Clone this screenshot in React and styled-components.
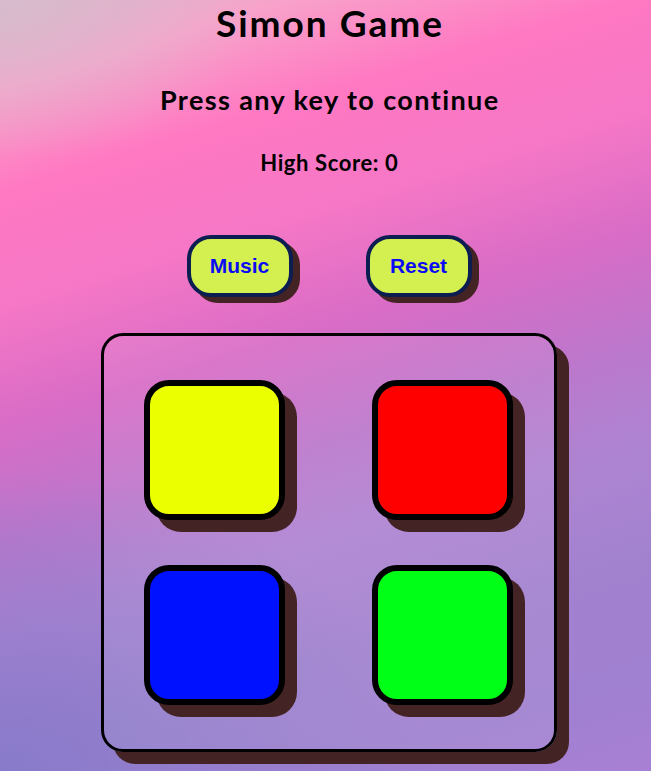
import React from "react";
import styled, { createGlobalStyle } from "styled-components";

const GlobalStyle = createGlobalStyle`
  html, body {
    margin: 0;
    padding: 0;
    min-height: 100%;
  }
  body {
    font-family: Lato, "Open Sans", sans-serif;
    background:
      radial-gradient(ellipse 420px 300px at 0% 100%, rgba(128, 120, 200, 0.75), rgba(128, 120, 200, 0) 100%),
      radial-gradient(ellipse 260px 160px at 0% 0%, rgba(214, 190, 206, 0.8), rgba(214, 190, 206, 0) 100%),
      linear-gradient(163deg,
        #dab4ca 0%,
        #f8a2ca 9%,
        #ff78c2 20%,
        #f577c6 32%,
        #d86cc6 44%,
        #bb78cc 56%,
        #ae84d2 66%,
        #a282cf 78%,
        #a080d0 90%,
        #a880d4 100%);
    background-attachment: fixed;
    min-height: 771px;
    overflow: hidden;
  }
`;

const Page = styled.main`
  display: flex;
  flex-direction: column;
  align-items: center;
  padding-left: 7px;
`;

const Heading = styled.h1`
  margin: ${(p) => p.$top}px 0 0;
  padding-left: ${(p) => p.$spacing}px;
  font-size: ${(p) => p.$size}px;
  line-height: ${(p) => p.$line}px;
  letter-spacing: ${(p) => p.$spacing}px;
  font-weight: 700;
  color: #000;
`;

const Controls = styled.div`
  display: flex;
  gap: 73px;
  margin-top: 59px;
`;

const ControlButton = styled.button`
  box-sizing: border-box;
  width: 106px;
  height: 62px;
  border: 4px solid #0b1d51;
  border-radius: 24px;
  background: #d4ef50;
  box-shadow: 7px 6px 0 #432323;
  color: #0a0af5;
  font-family: "Liberation Sans", Arial, sans-serif;
  font-weight: 700;
  font-size: 21px;
  cursor: pointer;
  padding: 0;
`;

const Board = styled.div`
  box-sizing: border-box;
  width: 456px;
  margin-top: 36px;
  display: grid;
  grid-template-columns: repeat(2, 141px);
  grid-auto-rows: 140px;
  column-gap: 87px;
  row-gap: 45px;
  padding: 44px 41px 44px 40px;
  border: 3px solid #000;
  border-radius: 22px;
  background: rgba(255, 255, 255, 0.07);
  box-shadow: 12px 12px 0 #432323;
`;

const Tile = styled.div`
  box-sizing: border-box;
  border: 6px solid #000;
  border-radius: 25px;
  background: ${(p) => p.$color};
  box-shadow: 12px 12px 0 #432323;
  cursor: pointer;
`;

const colors = ["#ebff00", "#ff0000", "#0011ff", "#00ff17"];

export default function App() {
  return (
    <>
      <GlobalStyle />
      <Page>
        <Heading $top={1} $size={37} $line={44} $spacing={2}>
          Simon Game
        </Heading>
        <Heading as="h2" $top={39} $size={27} $line={32} $spacing={1.4}>
          Press any key to continue
        </Heading>
        <Heading as="h3" $top={32.5} $size={22} $line={27} $spacing={0.6}>
          High Score: 0
        </Heading>
        <Controls>
          <ControlButton>Music</ControlButton>
          <ControlButton>Reset</ControlButton>
        </Controls>
        <Board>
          {colors.map((c) => (
            <Tile key={c} $color={c} />
          ))}
        </Board>
      </Page>
    </>
  );
}
